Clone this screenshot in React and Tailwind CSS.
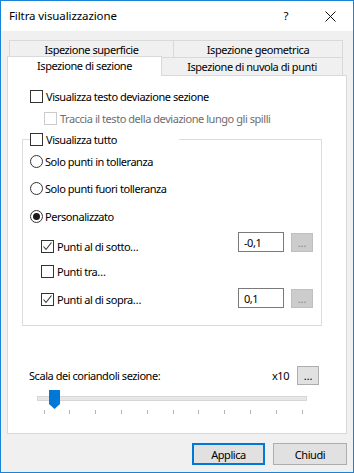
import React from 'react';

const font = { fontFamily: '"Noto Sans", "Liberation Sans", sans-serif' };

function Box({ checked, disabled }) {
  return (
    <span
      className={`flex h-[13px] w-[13px] shrink-0 items-center justify-center border bg-white ${
        disabled ? 'border-[#cccccc]' : 'border-[#333333]'
      }`}
    >
      {checked && (
        <svg width="11" height="11" viewBox="0 0 11 11">
          <polyline points="1.5,5.5 4,8.5 9.5,1.5" fill="none" stroke="#333" strokeWidth="1.1" />
        </svg>
      )}
    </span>
  );
}

function Radio({ checked }) {
  return (
    <span className="flex h-[13px] w-[13px] shrink-0 items-center justify-center rounded-full border border-[#333333] bg-white">
      {checked && <span className="h-[7px] w-[7px] rounded-full bg-[#1a1a1a]" />}
    </span>
  );
}

function Dots({ disabled }) {
  return (
    <span
      className={`flex h-[19px] w-[22px] items-center justify-center border text-[11px] leading-none tracking-normal ${
        disabled ? 'border-[#bfbfbf] bg-[#cccccc] text-[#8a8a8a]' : 'border-[#adadad] bg-[#e1e1e1] text-black'
      }`}
    >
      …
    </span>
  );
}

function Slider() {
  const ticks = Array.from({ length: 11 }, (_, i) => 6.5 + i * 25.8);
  return (
    <svg width="270" height="25" viewBox="0 0 270 25" className="ml-[29px] mt-[5px] block">
      <rect x="0.5" y="6.5" width="269" height="4" fill="#e7e7e7" stroke="#d6d6d6" />
      {ticks.map((x) => (
        <line key={x} x1={Math.round(x) + 0.5} y1="20" x2={Math.round(x) + 0.5} y2="24" stroke="#b4b4b4" />
      ))}
      <path d="M12 0 H23 V14 L17.5 19 L12 14 Z" fill="#0078d7" />
    </svg>
  );
}

export default function App() {
  return (
    <div
      style={font}
      className="flex h-[473px] w-[354px] flex-col border border-[#1883d7] bg-[#f0f0f0] text-[11px] tracking-[-0.45px] text-black"
    >
      <div className="flex h-[30px] items-center bg-white pl-[8px]">
        <span className="text-[11.5px] leading-none tracking-[-0.1px]">Filtra visualizzazione</span>
        <span className="ml-auto mr-[37px] text-[11.5px] leading-none">?</span>
        <svg width="11" height="11" viewBox="0 0 11 11" className="mr-[17px]">
          <path d="M0.5 0.5 L10.5 10.5 M10.5 0.5 L0.5 10.5" stroke="#111" strokeWidth="1" />
        </svg>
      </div>

      <div className="ml-[6px] mt-[9px] w-[340px]">
        <div className="flex h-[17px] pl-[2px]">
          <div className="flex w-[165px] items-center justify-center border border-b-0 border-[#d9d9d9] leading-none">
            Ispezione superficie
          </div>
          <div className="flex w-[169px] items-center justify-center border border-b-0 border-l-0 border-[#d9d9d9] leading-none">
            Ispezione geometrica
          </div>
        </div>
        <div className="flex h-[18px]">
          <div className="relative z-10 -mt-[1px] flex h-[20px] w-[155px] items-start justify-center border border-b-0 border-[#d9d9d9] bg-white pt-[3px] leading-none">
            Ispezione di sezione
          </div>
          <div className="flex h-[18px] w-[181px] items-center justify-center border border-b-0 border-l-0 border-[#d9d9d9] leading-none">
            Ispezione di nuvola di punti
          </div>
        </div>

        <div className="h-[359px] border border-[#d9d9d9] bg-white">
          <div className="ml-[22px] mt-[14px] flex h-[13px] items-center gap-[3px]">
            <Box />
            <span className="leading-none">Visualizza testo deviazione sezione</span>
          </div>
          <div className="ml-[36px] mt-[9px] flex h-[13px] items-center gap-[3px] text-[#6d6d6d]">
            <Box disabled />
            <span className="leading-none">Traccia il testo della deviazione lungo gli spilli</span>
          </div>

          <div className="relative ml-[14px] mt-[14px] h-[187px] w-[300px] border border-[#dcdcdc]">
            <div className="absolute -top-[7px] left-[7px] flex h-[13px] w-[149px] items-center gap-[3px] bg-white">
              <Box />
              <span className="leading-none">Visualizza tutto</span>
            </div>

            <div className="ml-[7px] mt-[15px] flex h-[13px] items-center gap-[2px]">
              <Radio />
              <span className="leading-none">Solo punti in tolleranza</span>
            </div>
            <div className="ml-[7px] mt-[14px] flex h-[13px] items-center gap-[2px]">
              <Radio />
              <span className="leading-none">Solo punti fuori tolleranza</span>
            </div>
            <div className="ml-[7px] mt-[15px] flex h-[13px] items-center gap-[2px]">
              <Radio checked />
              <span className="leading-none">Personalizzato</span>
            </div>

            <div className="mt-[9px] flex h-[20px] items-center pl-[18px] pr-[8px]">
              <div className="mt-[8px] flex h-[13px] items-center gap-[3px]">
                <Box checked />
                <span className="leading-none">Punti al di sotto…</span>
              </div>
              <div className="ml-auto flex h-[20px] w-[46px] items-center border border-[#7a7a7a] pl-[5px] leading-none">
                -0,1
              </div>
              <div className="ml-[7px]">
                <Dots disabled />
              </div>
            </div>

            <div className="ml-[18px] mt-[13px] flex h-[13px] items-center gap-[3px]">
              <Box />
              <span className="leading-none">Punti tra…</span>
            </div>

            <div className="mt-[10px] flex h-[20px] items-center pl-[18px] pr-[8px]">
              <div className="mt-[2px] flex h-[13px] items-center gap-[3px]">
                <Box checked />
                <span className="leading-none">Punti al di sopra…</span>
              </div>
              <div className="ml-auto flex h-[20px] w-[46px] items-center border border-[#7a7a7a] pl-[5px] leading-none">
                0,1
              </div>
              <div className="ml-[7px]">
                <Dots disabled />
              </div>
            </div>
          </div>

          <div className="mt-[40px] flex h-[19px] items-center pl-[21px] pr-[27px]">
            <span className="leading-none">Scala dei coriandoli sezione:</span>
            <span className="ml-auto mr-[8px] leading-none">x10</span>
            <Dots />
          </div>
          <Slider />
        </div>
      </div>

      <div className="ml-[6px] mt-[9px] flex w-[340px] justify-end gap-[8px]">
        <button className="flex h-[22px] w-[73px] items-center justify-center border-2 border-[#0078d7] bg-[#e1e1e1] leading-none">
          Applica
        </button>
        <button className="flex h-[22px] w-[74px] items-center justify-center border border-[#adadad] bg-[#e1e1e1] leading-none">
          Chiudi
        </button>
      </div>
    </div>
  );
}
